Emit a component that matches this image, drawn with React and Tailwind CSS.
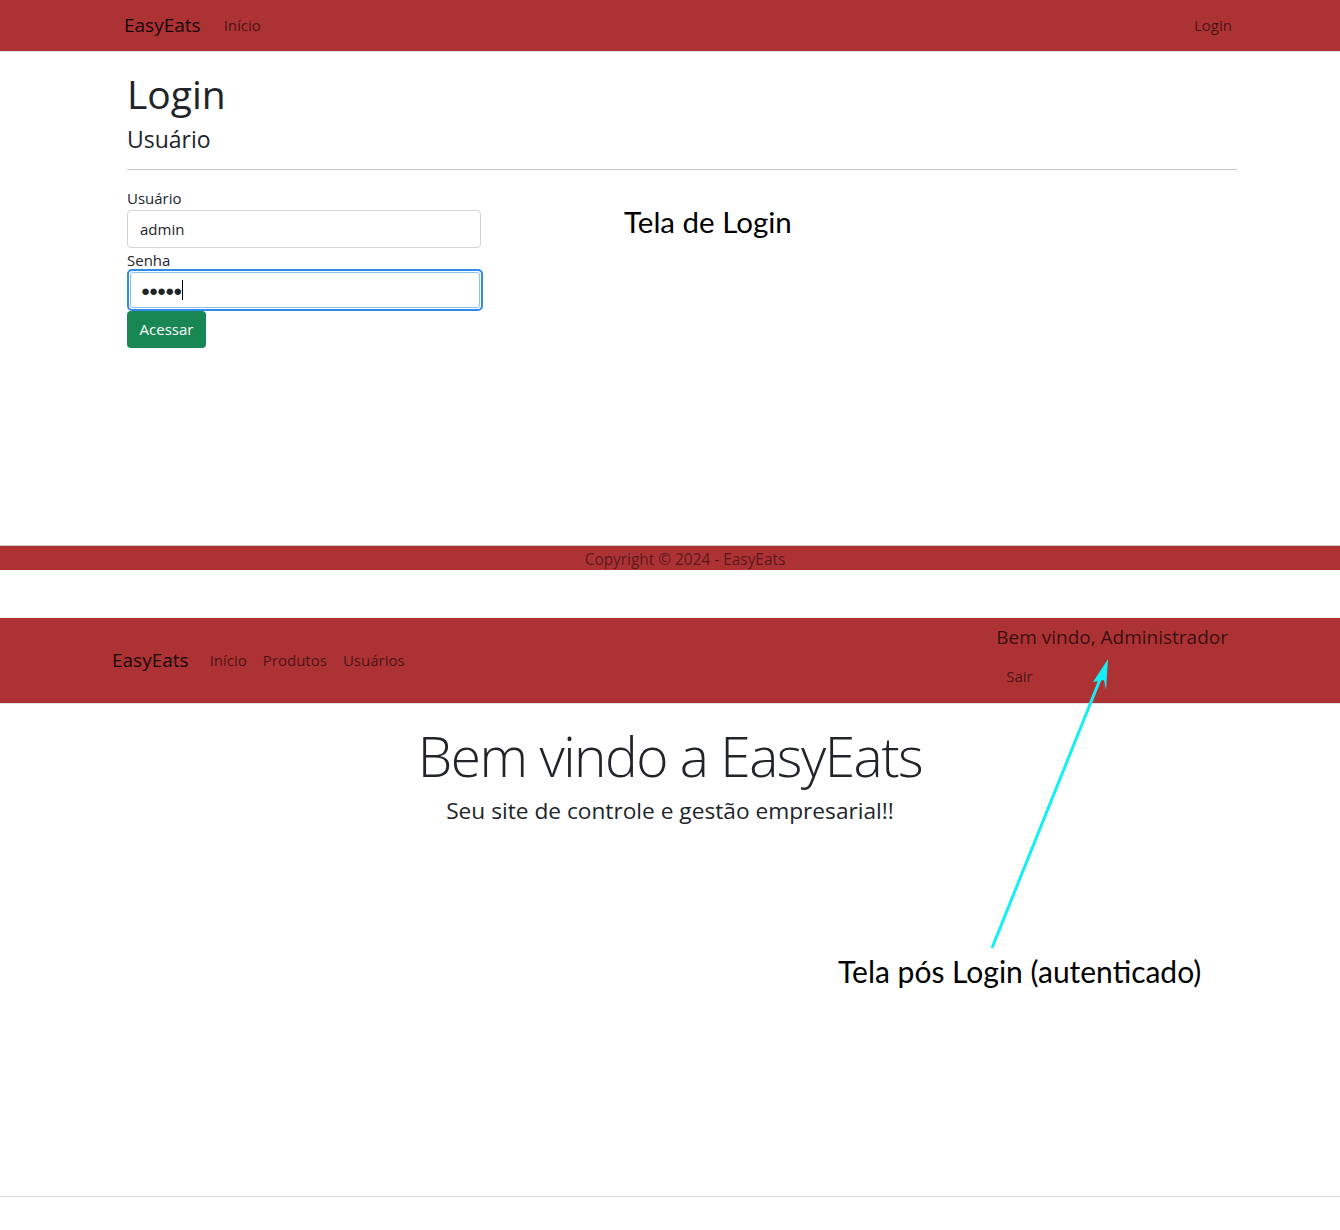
import React from "react";

const SANS = { fontFamily: '"Open Sans", "Noto Sans", sans-serif' };
const CAL = { fontFamily: 'Lato, "Liberation Sans", sans-serif' };

export default function App() {
  return (
    <div className="relative w-[1340px] h-[1230px] bg-white text-[#212529] overflow-hidden" style={SANS}>
      {/* ===== Login page ===== */}
      <div className="flex flex-col h-[570px]">
        <nav className="h-[52px] shrink-0 bg-[#ad3234] border-b border-[#dee2e6] flex items-center pl-[124px] pr-[108px]">
          <span className="text-[19px] text-black/90 mr-[23px]">EasyEats</span>
          <span className="text-[15px] text-black/60">Início</span>
          <span className="ml-auto text-[15px] text-black/60">Login</span>
        </nav>
        <main className="flex-1 pl-[127px] pr-[103px]">
          <h1 className="text-[39px] leading-[48px] font-normal mt-[18px]">Login</h1>
          <h4 className="text-[23px] leading-[28px] mt-[7px]">Usuário</h4>
          <hr className="mt-[16px] border-t border-[#c8c8c8]" />
          <div className="flex mt-[18px]">
            <form className="w-[356px] flex flex-col">
              <label className="text-[15px] leading-[20px]">Usuário</label>
              <div className="mt-[2px] w-[354px] h-[38px] border border-[#ced4da] rounded-[4px] flex items-center px-[12px] text-[15px]">admin</div>
              <label className="text-[15px] leading-[20px] mt-[2px] -mb-[1px]">Senha</label>
              <div className="w-[356px] h-[42px] rounded-[5px] border-2 border-[#2d8ceb] p-[1px]">
                <div className="w-full h-full border border-[#8cc0f2] rounded-[3px] flex items-center px-[10px] text-[15px] tracking-[-1px]">
                  ●●●●●<span className="inline-block w-px h-[20px] bg-black ml-[1px]" />
                </div>
              </div>
              <button type="button" className="w-[79px] h-[37px] bg-[#198754] text-white text-[15px] rounded-[4px] flex items-center justify-center">Acessar</button>
            </form>
            <div className="ml-[141px] mt-[16px] text-[29.5px] leading-[36px] text-black" style={CAL}>Tela de Login</div>
          </div>
        </main>
        <footer className="h-[25px] shrink-0 bg-[#ad3234] border-t border-[#d9c9c9] flex items-center justify-center pt-[3px]">
          <span className="text-[15.4px] text-black/50 ml-[30px]">Copyright © 2024 - EasyEats</span>
        </footer>
      </div>

      {/* ===== After-login page ===== */}
      <div className="mt-[48px]">
        <nav className="h-[86px] bg-[#ad3234] border-b border-[#dee2e6] flex items-center pl-[112px] pr-[112px]">
          <span className="text-[19px] text-black/90 mr-[13px]">EasyEats</span>
          <div className="flex text-[15px] text-black/60">
            <span className="px-[8px]">Início</span>
            <span className="px-[8px]">Produtos</span>
            <span className="px-[8px]">Usuários</span>
          </div>
          <div className="ml-auto flex flex-col self-stretch pt-[6px]">
            <span className="text-[19px] leading-[26px] text-black/70">Bem vindo, Administrador</span>
            <span className="mt-[15px] pl-[10px] text-[15px] leading-[22px] text-black/60">Sair</span>
          </div>
        </nav>
        <section className="flex flex-col items-center pt-[18px]">
          <h1 className="text-[55px] leading-[68px] font-light tracking-[-1.5px]">Bem vindo a EasyEats</h1>
          <p className="text-[22.7px] leading-[30px] mt-[6px]">Seu site de controle e gestão empresarial!!</p>
        </section>
        <div className="pl-[838px] mt-[126px] text-[30px] leading-[38px] text-black" style={CAL}>Tela pós Login (autenticado)</div>
      </div>

      <div className="absolute left-0 right-0 top-[1196px] h-px bg-[#dcdce0]" />

      {/* annotation arrow */}
      <svg className="absolute left-0 top-0 pointer-events-none" width="1340" height="1230">
        <line x1="992" y1="948" x2="1101" y2="677" stroke="#13f0f5" strokeWidth="3" />
        <polygon points="1108,659 1093,682 1104,680 1106,690" fill="#13f0f5" />
      </svg>
    </div>
  );
}
